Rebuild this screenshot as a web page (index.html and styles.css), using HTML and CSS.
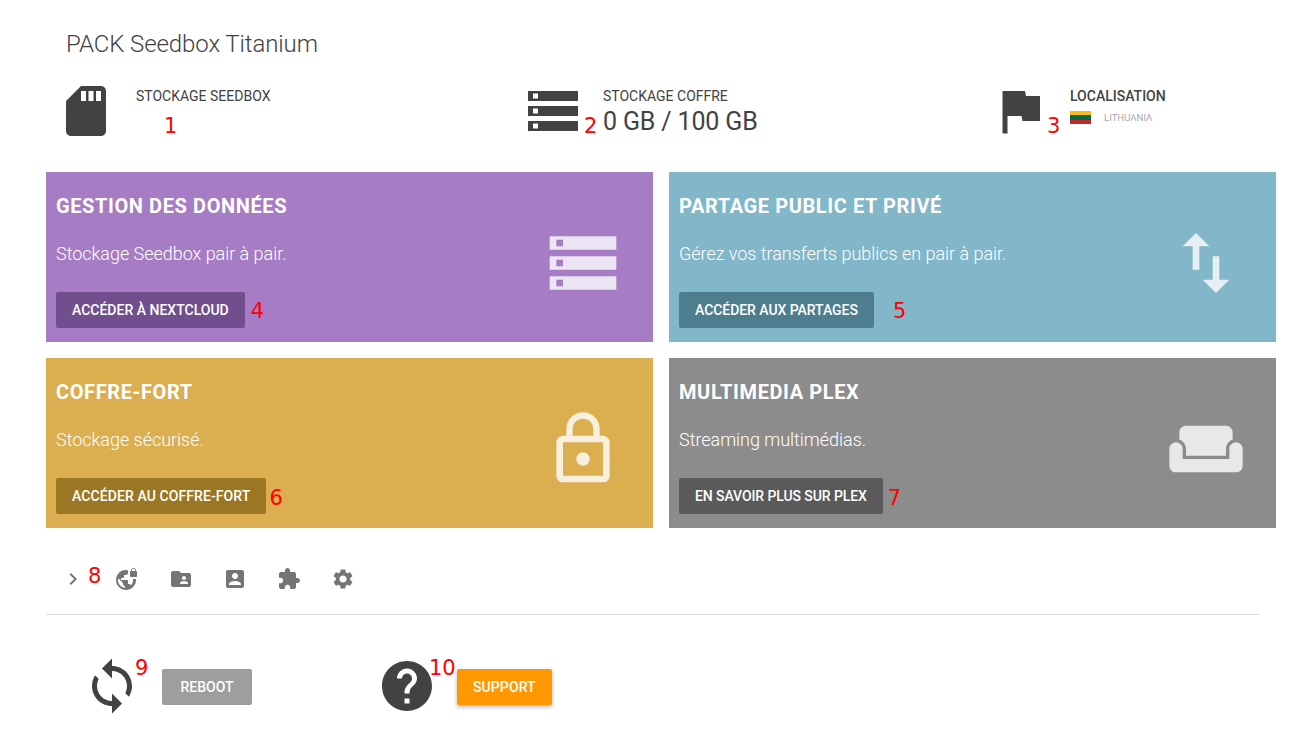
FILE: index.html
```html
<!DOCTYPE html>
<html lang="en">
<head>
    <meta charset="UTF-8">
    <title>PACK Seedbox Titanium</title>
    <link rel="stylesheet" href="styles.css">
</head>
<body>
    <h1 class="title">PACK Seedbox Titanium</h1>

    <div class="stats">
        <div class="stat">
            <svg class="stat-icon" viewBox="0 0 24 24"><path d="M18 2h-8L4.02 8 4 20c0 1.1.9 2 2 2h12c1.1 0 2-.9 2-2V4c0-1.1-.9-2-2-2zm-6 6h-2V4h2v4zm3 0h-2V4h2v4zm3 0h-2V4h2v4z"/></svg>
            <div class="stat-text">
                <div class="stat-label">STOCKAGE SEEDBOX</div>
            </div>
            <span class="mark mark-1">1</span>
        </div>
        <div class="stat">
            <svg class="stat-icon" viewBox="0 0 24 24"><path d="M2 20h20v-4H2v4zm2-3h2v2H4v-2zM2 4v4h20V4H2zm4 3H4V5h2v2zm-4 7h20v-4H2v4zm2-3h2v2H4v-2z"/></svg>
            <div class="stat-text">
                <div class="stat-label">STOCKAGE COFFRE</div>
                <div class="stat-value">0 GB / 100 GB</div>
            </div>
            <span class="mark mark-2">2</span>
        </div>
        <div class="stat">
            <svg class="stat-icon" viewBox="0 0 24 24"><path d="M14.4 6L14 4H5v17h2v-7h5.6l.4 2h7V6z"/></svg>
            <div class="stat-text">
                <div class="stat-label stat-label-strong">LOCALISATION</div>
                <div class="country">
                    <span class="flag"><i class="flag-y"></i><i class="flag-g"></i><i class="flag-r"></i></span>
                    <span class="country-name">LITHUANIA</span>
                </div>
            </div>
            <span class="mark mark-3">3</span>
        </div>
    </div>

    <div class="cards">
        <div class="card card-purple">
            <div class="card-body">
                <h2>GESTION DES DONNÉES</h2>
                <p>Stockage Seedbox pair à pair.</p>
                <div class="card-action"><a class="btn">ACCÉDER À NEXTCLOUD</a><span class="mark-card mark-4">4</span></div>
            </div>
            <svg class="card-icon" viewBox="0 0 24 24"><path d="M2 20h20v-4H2v4zm2-3h2v2H4v-2zM2 4v4h20V4H2zm4 3H4V5h2v2zm-4 7h20v-4H2v4zm2-3h2v2H4v-2z"/></svg>
        </div>
        <div class="card card-blue">
            <div class="card-body">
                <h2>PARTAGE PUBLIC ET PRIVÉ</h2>
                <p>Gérez vos transferts publics en pair à pair.</p>
                <div class="card-action"><a class="btn">ACCÉDER AUX PARTAGES</a><span class="mark-card mark-5">5</span></div>
            </div>
            <svg class="card-icon" viewBox="0 0 24 24"><path d="M16 17.01V10h-2v7.01h-3L15 21l4-3.99h-3zM9 3L5 6.99h3V14h2V6.99h3L9 3z"/></svg>
        </div>
        <div class="card card-gold">
            <div class="card-body">
                <h2>COFFRE-FORT</h2>
                <p>Stockage sécurisé.</p>
                <div class="card-action"><a class="btn">ACCÉDER AU COFFRE-FORT</a><span class="mark-card mark-6">6</span></div>
            </div>
            <svg class="card-icon" viewBox="0 0 24 24"><path d="M12 17c1.1 0 2-.9 2-2s-.9-2-2-2-2 .9-2 2 .9 2 2 2zm6-9h-1V6c0-2.76-2.24-5-5-5S7 3.24 7 6v2H6c-1.1 0-2 .9-2 2v10c0 1.1.9 2 2 2h12c1.1 0 2-.9 2-2V10c0-1.1-.9-2-2-2zM8.9 6c0-1.71 1.39-3.1 3.1-3.1s3.1 1.39 3.1 3.1v2H8.9V6zM18 20H6V10h12v10z"/></svg>
        </div>
        <div class="card card-grey">
            <div class="card-body">
                <h2>MULTIMEDIA PLEX</h2>
                <p>Streaming multimédias.</p>
                <div class="card-action"><a class="btn">EN SAVOIR PLUS SUR PLEX</a><span class="mark-card mark-7">7</span></div>
            </div>
            <svg class="card-icon" viewBox="0 0 24 24"><path d="M21 10c-1.1 0-2 .9-2 2v3H5v-3c0-1.1-.9-2-2-2s-2 .9-2 2v5c0 1.1.9 2 2 2h18c1.1 0 2-.9 2-2v-5c0-1.1-.9-2-2-2zm-3-5H6c-1.1 0-2 .9-2 2v2.15c1.16.41 2 1.52 2 2.81V14h12v-2.03c0-1.3.84-2.4 2-2.81V7c0-1.1-.9-2-2-2z"/></svg>
        </div>
    </div>

    <div class="toolbar">
        <svg class="tool" viewBox="0 0 24 24"><path d="M10 6L8.59 7.41 13.17 12l-4.58 4.59L10 18l6-6z"/></svg>
        <span class="mark mark-8">8</span>
        <svg class="tool" viewBox="0 0 24 24"><path d="M21 4v-.5C21 2.12 19.88 1 18.5 1S16 2.12 16 3.5V4c-.55 0-1 .45-1 1v4c0 .55.45 1 1 1h5c.55 0 1-.45 1-1V5c0-.55-.45-1-1-1zm-.8 0h-3.4v-.5c0-.94.76-1.7 1.7-1.7s1.7.76 1.7 1.7V4zm-2.28 8c.04.33.08.66.08 1 0 2.08-.8 3.97-2.1 5.39-.26-.81-1-1.39-1.9-1.39h-1v-3c0-.55-.45-1-1-1H6v-2h2c.55 0 1-.45 1-1V8h2c1.1 0 2-.9 2-2V3.46c-.95-.3-1.95-.46-3-.46C5.48 3 1 7.48 1 13s4.48 10 10 10 10-4.48 10-10c0-.34-.02-.67-.05-1h-2.03zM10 20.93c-3.95-.49-7-3.85-7-7.93 0-.62.08-1.21.21-1.79L8 16v1c0 1.1.9 2 2 2v1.93z"/></svg>
        <svg class="tool" viewBox="0 0 24 24"><path d="M20 6h-8l-2-2H4c-1.1 0-1.99.9-1.99 2L2 18c0 1.1.9 2 2 2h16c1.1 0 2-.9 2-2V8c0-1.1-.9-2-2-2zm-5 3c1.1 0 2 .9 2 2s-.9 2-2 2-2-.9-2-2 .9-2 2-2zm4 8h-8v-1c0-1.33 2.67-2 4-2s4 .67 4 2v1z"/></svg>
        <svg class="tool" viewBox="0 0 24 24"><path d="M3 5v14c0 1.1.89 2 2 2h14c1.1 0 2-.9 2-2V5c0-1.1-.9-2-2-2H5c-1.11 0-2 .9-2 2zm12 4c0 1.66-1.34 3-3 3s-3-1.34-3-3 1.34-3 3-3 3 1.34 3 3zm-9 8c0-2 4-3.1 6-3.1s6 1.1 6 3.1v1H6v-1z"/></svg>
        <svg class="tool" viewBox="0 0 24 24"><path d="M20.5 11H19V7c0-1.1-.9-2-2-2h-4V3.5C13 2.12 11.88 1 10.5 1S8 2.12 8 3.5V5H4c-1.1 0-1.99.9-1.99 2v3.8H3.5c1.49 0 2.7 1.21 2.7 2.7s-1.21 2.7-2.7 2.7H2V20c0 1.1.9 2 2 2h3.8v-1.5c0-1.49 1.21-2.7 2.7-2.7 1.49 0 2.7 1.21 2.7 2.7V22H17c1.1 0 2-.9 2-2v-4h1.5c1.38 0 2.5-1.12 2.5-2.5S21.88 11 20.5 11z"/></svg>
        <svg class="tool" viewBox="0 0 24 24"><path d="M19.14 12.94c.04-.3.06-.61.06-.94 0-.32-.02-.64-.07-.94l2.03-1.58c.18-.14.23-.41.12-.61l-1.92-3.32c-.12-.22-.37-.29-.59-.22l-2.39.96c-.5-.38-1.03-.7-1.62-.94l-.36-2.54c-.04-.24-.24-.41-.48-.41h-3.84c-.24 0-.43.17-.47.41l-.36 2.54c-.59.24-1.13.57-1.62.94l-2.39-.96c-.22-.08-.47 0-.59.22L2.74 8.87c-.12.21-.08.47.12.61l2.03 1.58c-.05.3-.09.63-.09.94s.02.64.07.94l-2.03 1.58c-.18.14-.23.41-.12.61l1.92 3.32c.12.22.37.29.59.22l2.39-.96c.5.38 1.03.7 1.62.94l.36 2.54c.05.24.24.41.48.41h3.84c.24 0 .44-.17.47-.41l.36-2.54c.59-.24 1.13-.56 1.62-.94l2.39.96c.22.08.47 0 .59-.22l1.92-3.32c.12-.22.07-.47-.12-.61l-2.01-1.58zM12 15.6c-1.98 0-3.6-1.62-3.6-3.6s1.62-3.6 3.6-3.6 3.6 1.62 3.6 3.6-1.62 3.6-3.6 3.6z"/></svg>
    </div>

    <div class="actions">
        <div class="action action-reboot">
            <svg class="action-icon" viewBox="0 0 24 24"><path d="M12 4V1L8 5l4 4V6c3.31 0 6 2.69 6 6 0 1.01-.25 1.97-.7 2.8l1.46 1.46C19.54 15.03 20 13.57 20 12c0-4.42-3.58-8-8-8zm0 14c-3.31 0-6-2.69-6-6 0-1.01.25-1.97.7-2.8L5.24 7.74C4.46 8.97 4 10.43 4 12c0 4.42 3.58 8 8 8v3l4-4-4-4v3z"/></svg>
            <a class="btn btn-reboot">REBOOT</a>
            <span class="mark mark-9">9</span>
        </div>
        <div class="action action-support">
            <svg class="action-icon" viewBox="0 0 24 24"><path d="M12 2C6.48 2 2 6.48 2 12s4.48 10 10 10 10-4.48 10-10S17.52 2 12 2zm1 17h-2v-2h2v2zm2.07-7.75l-.9.92C13.45 12.9 13 13.5 13 15h-2v-.5c0-1.1.45-2.1 1.17-2.83l1.24-1.26c.37-.36.59-.86.59-1.41 0-1.1-.9-2-2-2s-2 .9-2 2H8c0-2.21 1.79-4 4-4s4 1.79 4 4c0 .88-.36 1.68-.93 2.25z"/></svg>
            <a class="btn btn-support">SUPPORT</a>
            <span class="mark mark-10">10</span>
        </div>
    </div>
</body>
</html>
```

FILE: styles.css
```css
body {
    margin: 0;
    font-family: Roboto, sans-serif;
    color: #424242;
    background: #fff;
}
.title {
    margin: 0;
    padding: 28px 0 0 66px;
    font-size: 24px;
    font-weight: 300;
    line-height: 32px;
    letter-spacing: -.1px;
}

/* top stats */
.stats {
    display: grid;
    grid-template-columns: 467px 467px 1fr;
    margin-top: 21px;
    padding-left: 56px;
}
.stat {
    position: relative;
    display: flex;
    gap: 20px;
    height: 60px;
}
.stat-icon {
    flex: none;
    width: 60px;
    height: 60px;
    fill: #424242;
}
.stat-label {
    margin-top: 6px;
    font-size: 14px;
    line-height: 18px;
}
.stat-label-strong {
    font-weight: 500;
}
.stat-value {
    margin-top: 2px;
    font-size: 25px;
    line-height: 30px;
    letter-spacing: -.15px;
}
.country {
    display: flex;
    align-items: center;
    gap: 13px;
    margin-top: 6px;
}
.flag {
    display: flex;
    flex-direction: column;
    width: 21px;
    height: 13px;
}
.flag i {
    flex: 1;
}
.flag-y { background: #fdb913; }
.flag-g { background: #006a44; }
.flag-r { background: #c1272d; }
.country-name {
    font-size: 9.6px;
    color: #aaa;
}

/* cards */
.cards {
    display: grid;
    grid-template-columns: 607px 607px;
    grid-auto-rows: 170px;
    gap: 16px;
    margin-top: 31px;
    padding-left: 46px;
}
.card {
    display: flex;
    justify-content: space-between;
    padding: 0 30px 0 10px;
    color: #fff;
}
.card h2 {
    margin: 0;
    padding-top: 21px;
    font-size: 20px;
    font-weight: 700;
    line-height: 26px;
    letter-spacing: .6px;
}
.card p {
    margin: 22px 0 0;
    font-size: 18px;
    font-weight: 300;
    line-height: 26px;
    letter-spacing: -.03px;
}
.card-action {
    display: flex;
    align-items: center;
    margin-top: 25px;
}
.card-icon {
    flex: none;
    width: 80px;
    height: 80px;
    margin-top: 51px;
    fill: rgba(255, 255, 255, .8);
}
.card-purple { background: #a67cc4; }
.card-blue { background: #82b6c9; }
.card-gold { background: #dbae4f; }
.card-grey { background: #8c8c8c; }
.card-purple .btn { background: #714e8d; }
.card-blue .btn { background: #4e7d8d; letter-spacing: -.05px; }
.card-gold .btn { background: #9b7723; letter-spacing: .09px; }
.card-grey .btn { background: #5a5a5a; letter-spacing: -.09px; }

.btn {
    display: inline-block;
    height: 36px;
    padding: 0 16px;
    border-radius: 2px;
    color: #fff;
    font-size: 14px;
    font-weight: 500;
    line-height: 36px;
}
.btn-reboot {
    padding: 0 18.5px;
    background: #9e9e9e;
}
.btn-support {
    background: #ff9800;
    box-shadow: 0 2px 4px rgba(0, 0, 0, .3);
    letter-spacing: .1px;
}

/* toolbar */
.toolbar {
    position: relative;
    display: flex;
    align-items: center;
    gap: 30px;
    width: 1199px;
    height: 71px;
    margin: 15px 0 0 46px;
    padding-left: 15px;
    border-bottom: 1px solid #ddd;
}
.tool {
    width: 24px;
    height: 24px;
    fill: #757575;
}

/* reboot and support */
.actions {
    display: flex;
    margin-top: 41px;
}
.action {
    position: relative;
    display: flex;
    align-items: center;
    height: 60px;
}
.action-reboot {
    width: 295px;
    padding-left: 82px;
    box-sizing: content-box;
}
.action .btn {
    margin: 2px 0 0 20px;
}
.action-icon {
    flex: none;
    width: 60px;
    height: 60px;
    fill: #424242;
}

/* red numbers drawn over the screenshot */
.mark,
.mark-card {
    color: #f00;
    font-family: "DejaVu Sans", sans-serif;
    font-size: 21px;
    line-height: 24px;
}
.mark {
    position: absolute;
}
.mark-1 { left: 108px; top: 33px; }
.mark-2 { left: 61px; top: 33px; }
.mark-3 { left: 57px; top: 33px; }
.mark-4 { margin: 2px 0 0 6px; }
.mark-5 { margin: 2px 0 0 19px; }
.mark-6 { margin: 4px 0 0 3px; }
.mark-7 { margin: 4px 0 0 5px; }
.mark-8 { left: 42px; top: 21px; }
.mark-9 { left: 135px; top: 0; }
.mark-10 { left: 52px; top: 0; }
```
